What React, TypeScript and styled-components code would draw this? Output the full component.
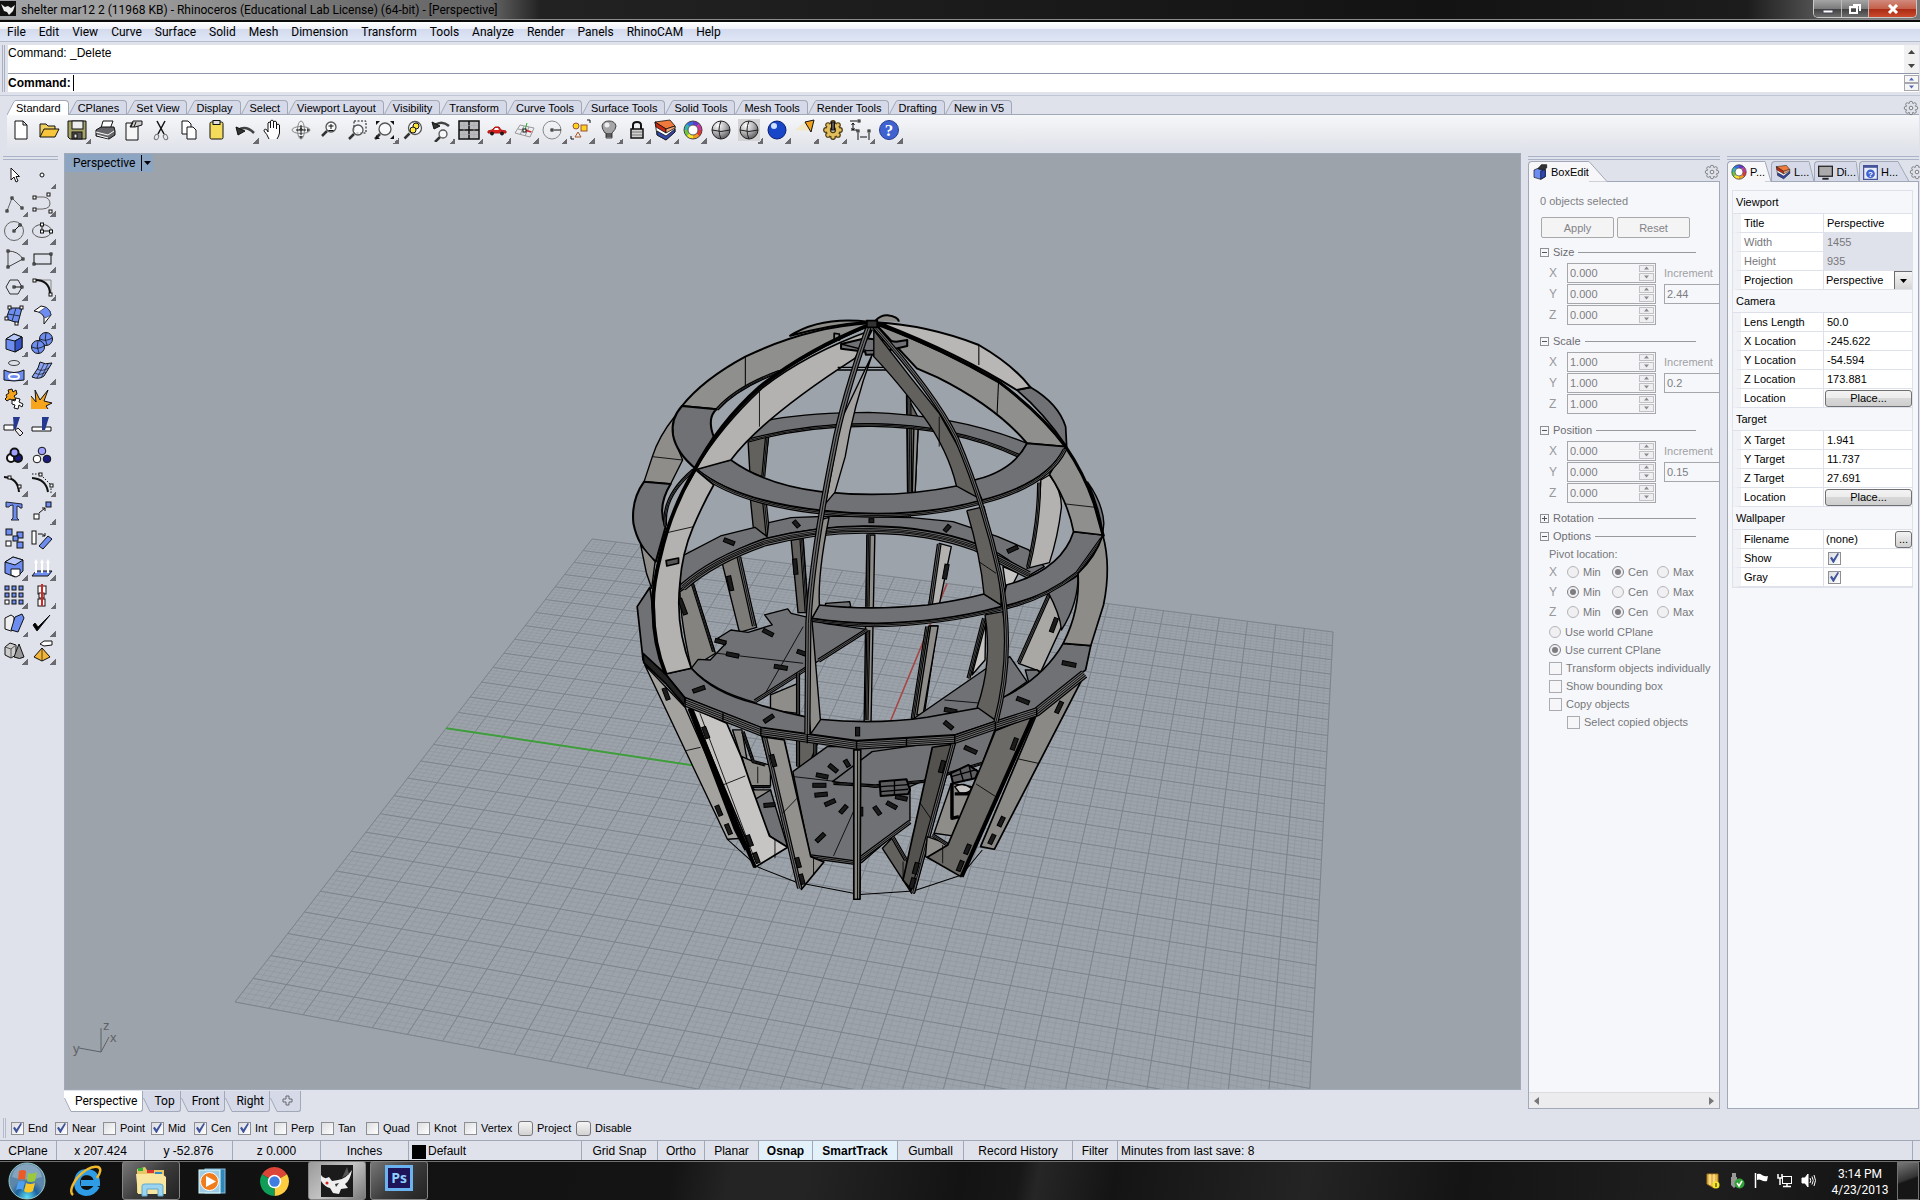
import React from 'react';
import styled, { createGlobalStyle, css } from 'styled-components';

const ui = '"Liberation Sans", Arial, sans-serif';
const segoe = 'Roboto, "Open Sans", sans-serif';
const edge = '#a1a9b9';
const chrome = '#dfe2ea';

const Global = createGlobalStyle`
  *, *::before, *::after { box-sizing: border-box; }
  html, body { margin: 0; height: 100%; }
  body { background: ${chrome}; font: 11px ${ui}; color: #000; overflow: hidden; }
  button, input, select { font: inherit; color: inherit; margin: 0; padding: 0; border: 0; background: none; border-radius: 0; }
  svg { display: block; flex: none; }
`;

const Page = styled.div`display: flex; flex-direction: column; height: 100vh;`;

/* ---------- title bar ---------- */
const TitleBar = styled.header`
  display: flex; align-items: flex-start; height: 22px; flex: none;
  background: linear-gradient(90deg, #77777799 0, #a0a0a0 130px, #6e6e6e 360px, #666 490px, #222 540px, #131313 75%, #1c1c1c 91%, #777 97%);
  border-bottom: 2px solid #0b0b0b; box-shadow: inset 0 -1px #8a8a8a;
`;
const TitleText = styled.h1`margin: 0; padding-left: 5px; font: 12px/20px ${segoe}; color: #000; flex: 1;`;
const WinButtons = styled.div`
  display: flex; height: 18px; margin-right: 3px; border: 1px solid #c9c9c9; border-top: 0; border-radius: 0 0 5px 5px; overflow: hidden;
`;
const WinButton = styled.button<{ $w: number; $red?: boolean }>`
  width: ${p => p.$w}px; display: grid; place-items: center; border-right: 1px solid #bbb;
  background: ${p => (p.$red ? 'linear-gradient(#d08a7c 0, #c5614c 50%, #a82a13 52%, #cc4a2c)' : 'linear-gradient(#a5a5a5 0, #7c7c7c 50%, #3f3f3f 52%, #6d6d6d)')};
  &:last-child { border-right: 0; }
`;

/* ---------- menu ---------- */
const MenuBar = styled.nav`
  display: flex; height: 20px; flex: none; align-items: center; padding-left: 1px;
  background: linear-gradient(#fff 0, #eef1f8 35%, #d3daed 36%, #dfe6f6 95%); border-bottom: 1px solid #b6bccc;
`;
const MenuItem = styled.button`font: 12px/18px ${segoe}; padding: 0 7px 0 6px;`;

/* ---------- command area ---------- */
const Command = styled.section`
  display: flex; flex-direction: column; height: 47px; flex: none; margin: 3px 1px 3px 2px; padding-left: 3px;
  border-left: 3px double #a9b0c4; font-size: 12px;
`;
const History = styled.div`display: flex; background: #fff; height: 29px; border-bottom: 1px solid #8f98ab;`;
const HistoryText = styled.div`flex: 1; line-height: 16px;`;
const Prompt = styled.div`display: flex; align-items: center; height: 18px; background: #fff;`;
const PromptLabel = styled.label`font-weight: bold; padding: 0 2px 0 0;`;
const PromptInput = styled.input`flex: 1; height: 16px; border-left: 1px solid #000; outline: 0;`;
const ScrollPair = styled.div`display: flex; flex-direction: column; width: 15px; background: #f1f1f1;`;
const ScrollBtn = styled.button<{ $boxed?: boolean }>`
  flex: 1; display: grid; place-items: center; ${p => p.$boxed && css`border: 1px solid #a7a7ad; background: #f6f6f6; min-height: 8px;`}
`;
const Caret = ({ up, c = '#444', w = 7 }: { up?: boolean; c?: string; w?: number }) => (
  <svg width={w} height="4" viewBox="0 0 7 4"><path d={up ? 'M0 4L3.500 0L7 4Z' : 'M0 0L3.500 4L7 0Z'} fill={c} /></svg>
);

/* ---------- toolbar tabs ---------- */
const Tools = styled.section`
  flex: none; height: 56px; border-top: 1px solid #c0c6d4; padding: 4px 1px 0 7px;
`;
const TabRow = styled.div`display: flex; height: 15px; align-items: stretch; box-shadow: inset 0 -1px ${edge};`;
const TabButton = styled.button<{ $on?: boolean }>`display: flex; color: #000; height: 15px;`;
const TabLabel = styled.span<{ $on?: boolean }>`
  border: solid ${edge}; border-width: 1px 1px 0 0; border-radius: 0 4px 0 0; padding: 0 7px 0 0; line-height: 15px; height: 15px; white-space: nowrap;
  background: ${p => (p.$on ? '#fff' : '#d5d9e8')}; ${p => !p.$on && 'box-shadow: inset 0 -1px #a1a9b9;'}
`;
const GearSlot = styled.button`margin-left: auto; align-self: center; display: grid; place-items: center; width: 16px;`;
const IconRow = styled.div`display: flex; height: 36px; padding-top: 1px; background: linear-gradient(#f6f7f9, #e8eaef 60%, ${chrome});`;
const IconButton = styled.button<{ $more?: boolean }>`
  width: 28px; height: 28px; display: grid; place-items: center; 
  ${p => p.$more && css`background: linear-gradient(135deg, transparent 50%, #6b6b6f 50%) 100% 100% / 6px 6px no-repeat;`}
`;

/* ---------- main area ---------- */
const Main = styled.main`display: flex; flex: 1; min-height: 0;`;
const LeftTools = styled.aside`width: 64px; flex: none; padding: 5px 6px 0 3px;`;
const Grip = styled.div`height: 4px; border: solid #aab2c8; border-width: 1px 0;`;
const LeftGrid = styled.div`display: grid; grid-template-columns: 28px 28px; grid-auto-rows: 28px; margin-left: -3px; padding-top: 1px;`;
const Center = styled.div`flex: 1; min-width: 0; display: flex; flex-direction: column; padding-top: 2px;`;
const Viewport = styled.section`
  flex: 1; min-height: 0; display: grid; background: #9da3aa; border: solid ${edge}; border-width: 1px 1px 1px 1px; overflow: hidden;
  & > * { grid-area: 1 / 1; }
`;
const Scene = styled.svg`width: 100%; height: 100%; min-height: 0;`;
const ViewLabel = styled.button`
  align-self: start; justify-self: start; display: flex; align-items: center; height: 18px; padding-left: 8px; gap: 6px; background: #8ba5c3; font: 12px/18px ${segoe}; z-index: 1;
`;
const LabelDrop = styled.span`display: flex; align-items: center; height: 16px; border-left: 1px solid #000; padding: 0 2px;`;
const ViewTabs = styled.div`display: flex; height: 26px; flex: none; padding-top: 1px;`;
const ViewTab = styled.button<{ $on?: boolean }>`
  display: flex; height: 21px; font: 12px/20px ${segoe};
`;
const ViewTabLabel = styled.span<{ $on?: boolean }>`
  height: 21px; padding-right: 5px; border: solid ${edge}; border-width: 0 1px 1px 0; border-radius: 0 0 3px 0; background: ${p => (p.$on ? '#fff' : '#d5d9e8')};
`;

/* ---------- docked panels ---------- */
const Docks = styled.div`display: flex; gap: 7px; flex: none; padding: 5px 1px 7px 7px;`;
const Dock = styled.section`width: 192px; display: flex; flex-direction: column;`;
const DockTabs = styled.div`display: flex; height: 21px; margin-top: 1px; box-shadow: inset 0 -1px ${edge};`;
const DockTab = styled.button`display: flex; height: 21px;`;
const DockTabLabel = styled.span<{ $on?: boolean }>`
  display: flex; align-items: center; gap: 3px; height: 21px; padding-left: 3px; border: solid ${edge}; border-width: 1px 0 0 1px; border-radius: 4px 0 0 0;
  background: ${p => (p.$on ? '#f7f7fa' : '#d5d9e8')}; ${p => !p.$on && 'box-shadow: inset 0 -1px #a1a9b9;'}
`;
const DockBody = styled.div`flex: 1; min-height: 0; display: flex; flex-direction: column; background: #f6f7fa; border: 1px solid ${edge}; border-top: 0; overflow: hidden;`;

const BoxContent = styled.div`flex: 1; padding: 12px 0 0 11px; color: #808084;`;
const Selected = styled.p`margin: 0; line-height: 14px;`;
const PairButtons = styled.div`display: flex; gap: 3px; margin: 9px 0 4px 1px;`;
const PushButton = styled.button`width: 73px; height: 21px; border: 1px solid #a9a9ac; border-radius: 2px; background: #f4f4f5; color: #838387;`;
const Section = styled.section`margin-bottom: 6px;`;
const SectionHead = styled.h2<{ $h: number }>`
  display: flex; align-items: center; gap: 4px; margin: 0 23px 0 0; height: ${p => p.$h}px; font: 11px ${ui}; color: #6d6d72;
  &::after { content: ''; flex: 1; height: 1px; background: #98999d; }
`;
const Fold = styled.button`width: 9px; height: 9px; border: 1px solid #8f8f95; display: grid; place-items: center;`;
const AxisGrid = styled.div`display: grid; grid-template-columns: 27px 89px 8px 1fr; grid-auto-rows: 21px; align-items: center;`;
const AxisName = styled.label`padding-left: 9px; font-size: 12px; color: #98999d;`;
const Spin = styled.div`display: flex; height: 20px; border: 1px solid #a6a7ab; background: #f6f6f9; padding: 1px;`;
const SpinInput = styled.input`flex: 1; min-width: 0; padding-left: 1px; color: #7c7d82;`;
const SpinArrows = styled.div`display: flex; flex-direction: column; gap: 1px; width: 15px; button { border: 1px solid #c2c2c6; background: #efeff1; }`;
const IncLabel = styled.label`grid-column: 4; color: #a0a1a5;`;
const IncInput = styled.input`grid-column: 4; height: 20px; width: 100%; border: 1px solid #a6a7ab; border-right: 0; padding-left: 2px; color: #7c7d82;`;
const Options = styled.div`padding-left: 9px; display: flex; flex-direction: column;`;
const PivotRow = styled.fieldset`border: 0; margin: 0; padding: 0; display: grid; grid-template-columns: 18px 45px 45px 1fr; align-items: center; height: 20px; color: #98999d; font-size: 12px;`;
const Choice = styled.label<{ $in?: boolean }>`
  display: flex; align-items: center; gap: 4px; height: 18px; font-size: 11px; color: #77777c; white-space: nowrap; padding-left: ${p => (p.$in ? 18 : 0)}px;
`;
const Radio = styled.input`
  appearance: none; width: 12px; height: 12px; border: 1px solid #b5b5b9; border-radius: 50%; background: #f0f0f2; display: grid; place-items: center;
  &:checked { border-color: #808084; } &:checked::before { content: ''; width: 6px; height: 6px; border-radius: 50%; background: #7d7d81; }
`;
const Check = styled.input`
  appearance: none; width: 13px; height: 13px; flex: none; border: 1px solid #8e8f93; background: linear-gradient(135deg, #dcdde0, #fff); display: grid; place-items: center;
  &:checked::before { content: ''; width: 9px; height: 10px; background: #3f549d; clip-path: polygon(0 50%, 20% 38%, 38% 62%, 84% 0, 100% 8%, 42% 100%, 34% 100%); }
  &:disabled { border-color: #acacb0; background: #f6f6f9; }
`;
const HScroll = styled.div`display: flex; justify-content: space-between; align-items: center; height: 16px; padding: 0 5px; background: #ececee; border-top: 1px solid #ddd;`;

const PropTable = styled.table`margin: 8px 6px 0 4px; border-collapse: separate; border-spacing: 0; table-layout: fixed; width: 181px; border: 1px solid #dfe1ea;`;
const HeadCell = styled.th`height: 23px; padding: 0 0 0 3px; text-align: left; font-weight: normal; border-bottom: 1px solid #dfe1ea;`;
const PropRow = styled.tr<{ $dim?: boolean }>`
  height: 19px; background: #fff; color: ${p => (p.$dim ? '#77777b' : '#000')};
  th, td { border-bottom: 1px solid #dfe1ea; padding: 0; text-align: left; font-weight: normal; height: 19px; }
  th { border-left: 8px solid #f1f2f6; padding-left: 3px; }
  td { border-left: 1px solid #dfe1ea; background: ${p => (p.$dim ? '#dfe2ea' : '#fff')}; }
`;
const ValueInput = styled.input`width: 100%; padding-left: 3px; height: 16px; display: block;`;
const ValueSelect = styled.div`display: flex; align-items: stretch; height: 18px; select { appearance: none; flex: 1; padding-left: 2px; min-width: 0; }`;
const SelectArrow = styled.span`width: 18px; display: grid; place-items: center; border: solid #6c6c70; border-width: 1px 0 0 1px; background: linear-gradient(#f4f4f4, #d5d5d5);`;
const PlaceButton = styled.button`display: block; width: 87px; height: 17px; margin-left: 1px; border: 1px solid #707074; border-radius: 3px; background: linear-gradient(#f3f3f3 0, #ececec 48%, #d8d8d8 50%, #cecece);`;
const DotsButton = styled.button`width: 17px; height: 17px; border: 1px solid #707074; border-radius: 3px; background: linear-gradient(#f3f3f3, #d0d0d0);`;
const FileCell = styled.div`display: flex; justify-content: space-between; align-items: center; padding-left: 2px;`;
const CheckCell = styled.div`padding-left: 4px;`;

/* ---------- bottom ---------- */
const OsnapBar = styled.div`display: flex; align-items: center; height: 24px; flex: none; margin-left: 3px; `;
const OsnapGrip = styled.div`width: 3px; height: 20px; border: solid #b3bacb; border-width: 0 1px; margin-right: 5px;`;
const Osnap = styled.label<{ $w: number }>`display: flex; align-items: center; gap: 4px; width: ${p => p.$w}px; white-space: nowrap;`;
const ModeButton = styled.button`width: 15px; height: 15px; border: 1px solid #77777b; border-radius: 3px; background: linear-gradient(#f5f5f5, #d2d2d2);`;
const StatusBar = styled.footer`display: flex; height: 20px; flex: none; border-top: 1px solid ${edge}; font-size: 12px; line-height: 20px;`;
const StatusCell = styled.button<{ $w: number; $on?: boolean; $left?: boolean }>`
  width: ${p => p.$w}px; border-right: 1px solid ${edge}; white-space: nowrap; display: flex; align-items: center; gap: 2px;
  justify-content: ${p => (p.$left ? 'flex-start' : 'center')}; ${p => p.$left && 'padding-left: 3px;'}
  ${p => p.$on && 'font-weight: bold; background: #e3f1fb;'}
`;
const Swatch = styled.span`width: 14px; height: 14px; background: #000; margin-top: 2px;`;
const Minutes = styled.output`flex: 1; padding-left: 3px; margin-right: 7px; border-right: 1px solid ${edge};`;

const TaskBar = styled.nav`
  display: flex; align-items: stretch; height: 40px; flex: none; padding-left: 4px; border-top: 1px solid #0b0b0b; box-shadow: inset 0 1px #707070;
  background: linear-gradient(100deg, #101010 0, #141414 35%, #242424 38%, #242424 42%, #131313 50%, #171717 53%, #262626 54%, #141414 58%, #242424 68%, #141414 76%, #1f1f1f 88%, #111);
`;
const TaskButton = styled.button<{ $w: number; $state?: 'open' | 'active' }>`
  width: ${p => p.$w}px; display: grid; place-items: center; margin: 0 4px 0 0; padding-top: 1px;
  ${p => p.$state && css`border: 1px solid #858585; border-radius: 3px; background: ${p.$state === 'active' ? 'linear-gradient(135deg, #999, #c4c4c4 50%, #777)' : 'linear-gradient(135deg, #777, #3c3c3c 50%, #222)'};`}
`;
const Tray = styled.div`display: flex; align-items: center; margin-left: auto; gap: 8px; button { display: grid; place-items: center; width: 16px; }`;
const Clock = styled.time`text-align: center; color: #fff; font: 12px/16px ${segoe}; padding: 3px 0 0; margin-left: 6px; width: 58px;`;
const ShowDesktop = styled.button`&& { width: 22px; } height: 38px; align-self: center; margin-right: 1px; border: 1px solid #737373; background: linear-gradient(160deg, #777, #333 45%, #161616 50%);`;

/* ================= icons ================= */
const K = '#111';
const B = '#6d8df0';
const sq = (x: number, y: number, s = 3, f = '#fff') => <rect key={`${x}-${y}`} x={x} y={y} width={s} height={s} fill={f} stroke={K} />;
const I = ({ children, s = 24 }: { children: React.ReactNode; s?: number }) => (
  <svg width={s} height={s} viewBox="0 0 24 24" fill="none" stroke={K} strokeWidth="1">{children}</svg>
);
const Lens = ({ x = 14, y = 9, r = 5 }) => (
  <g><path d={`M${x - r + 1} ${y + r - 1}L${x - r - 4} ${y + r + 4}`} strokeWidth="2.500" stroke="#333" /><circle cx={x} cy={y} r={r} fill="#ffffff99" stroke="#555" strokeWidth="1.300" /></g>
);
const Globe = () => (
  <g>
    <defs><radialGradient id="globe" cx=".35" cy=".25" r=".8"><stop offset="0" stopColor="#fff" /><stop offset=".5" stopColor="#b5b5b8" /><stop offset="1" stopColor="#58585c" /></radialGradient></defs>
    <circle cx="12" cy="12" r="9" fill="url(#globe)" stroke="#222" /><path d="M3 12Q12 15 21 12M12 3Q8 12 12 21" stroke="#222" />
  </g>
);
const Wheel = () => {
  const c = ['#e8362c', '#f39a1f', '#f4e52b', '#6fc53b', '#2fb7b0', '#2f6fe0', '#6a35c8', '#d0309c'];
  return (<g>{c.map((k, i) => { const a = (i * Math.PI) / 4, b = a + 0.82; return <path key={k} d={`M${12 + 7 * Math.cos(a)} ${12 + 7 * Math.sin(a)}A7 7 0 0 1 ${12 + 7 * Math.cos(b)} ${12 + 7 * Math.sin(b)}`} stroke={k} strokeWidth="4" />; })}<circle cx="12" cy="12" r="9" stroke="#444" /><circle cx="12" cy="12" r="5" stroke="#555" fill="#fff" /></g>);
};
const LayersArt = () => (
  <g strokeWidth=".8">
    <path d="M2 4L13 11L22 8V14L13 22L4 17Z" fill="#fff" />
    <path d="M4 13L13 18L22 11V14L13 22L4 17Z" fill="#3247a8" />
    <path d="M2 4L17 2L22 8L13 11Z" fill="#f07a3c" />
    <path d="M2 4L13 11V15L3 9Z" fill="#c8260e" />
    <path d="M13 11L22 8V10L13 15Z" fill="#f4a878" />
  </g>
);
const GearArt = ({ f = 'none', s = '#77787d' }) => {
  const t = Array.from({ length: 8 }, (_, i) => (i * Math.PI) / 4);
  return (<g stroke={s}>{t.map(a => <circle key={a} cx={12 + 7 * Math.cos(a)} cy={12 + 7 * Math.sin(a)} r="2.300" fill={f} strokeWidth="1.200" />)}<circle cx="12" cy="12" r="6.500" fill={f === 'none' ? chrome : f} stroke="none" /><circle cx="12" cy="12" r="2.500" fill="#eee" strokeWidth="1.300" /></g>);
};
const Gear = () => <svg width="16" height="16" viewBox="1 1 22 22" fill="none"><GearArt /></svg>;

const top: [string, boolean, React.ReactNode][] = [
  ['New', false, <path d="M6 3H14L18 7V21H6ZM14 3V7H18" fill="#fff" />],
  ['Open', false, <g><path d="M3 19V6H9L11 8H18V11" fill="#f0d060" /><path d="M3 19L7 11H22L18 19Z" fill="#f7c63c" /></g>],
  ['Save', true, <g><path d="M3 3H21V21H5L3 19Z" fill="#a7a468" /><rect x="7" y="3" width="11" height="8" fill="#eee" /><rect x="7" y="14" width="10" height="7" fill="#555" /><rect x="9" y="16" width="3" height="4" fill="#eee" /></g>],
  ['Print', false, <g><path d="M8 10L10 3H20L17 11" fill="#fff" /><path d="M3 12L8 9H21L22 13V17L16 21L3 18Z" fill="#66666a" /><path d="M3 14L15 17L21 13M4 17L15 20" stroke="#fff" /></g>],
  ['Properties', false, <g><path d="M5 5H17V22H5Z" fill="#f6f6f6" /><path d="M9 9L12 3H21V7L14 9Z" fill="#ccc" /><path d="M12 4L10 9M15 4L13 9" /></g>],
  ['Cut', false, <g><path d="M8 3L15 16M16 3L9 16" strokeWidth="1.500" /><ellipse cx="7.500" cy="19" rx="2" ry="2.800" transform="rotate(25 7.500 19)" stroke="#777" /><ellipse cx="16.500" cy="19" rx="2" ry="2.800" transform="rotate(-25 16.500 19)" stroke="#777" /></g>],
  ['Copy', false, <g fill="#fff"><path d="M5 3H11L14 6V16H5Z" /><path d="M10 9H16L19 12V21H10Z" /></g>],
  ['Paste', false, <g><rect x="5" y="4" width="13" height="17" rx="1.500" fill="#f3dc5c" /><rect x="8" y="2.500" width="7" height="4" fill="#ddd" /></g>],
  ['Undo', true, <g><path d="M5 12Q13 7 21 15" strokeWidth="2.500" stroke="#444" /><path d="M3 9L5 17L12 13Z" fill="#333" /></g>],
  ['Pan', false, <path d="M8 21Q6 16 3 13Q3 10 6 12L7 14V5Q8 3 9.500 5V10V3Q11 1 12.500 3V10V4Q14 2 15.500 4V11V7Q17 5 18.500 7V15Q18 18 16 21" fill="#fff" />],
  ['Rotate View', false, <g stroke="#888"><ellipse cx="12" cy="12" rx="9" ry="3.500" /><ellipse cx="12" cy="12" rx="3.500" ry="9" /><path d="M12 7V17M7 12H17" stroke={K} /><path d="M12 9L14 12H10Z" fill="#333" stroke="none" /><path d="M12 21L14 18H10ZM21 12L18 14V10Z" fill="#444" stroke="none" /></g>],
  ['Zoom', false, <g><Lens /><path d="M11.500 8H16.500M14 6V11M11.500 12.500H16.500" /></g>],
  ['Zoom Window', false, <g><rect x="9" y="3" width="12" height="12" strokeDasharray="2 1.500" /><Lens x={13} y={12} /></g>],
  ['Zoom Extents', true, <g><Lens x={12} y={11} r={6} /><path d="M3 3H7L3 7ZM21 3H17L21 7ZM21 21H17L21 17ZM3 21V17L7 21Z" fill={K} stroke="none" /></g>],
  ['Zoom Selected', false, <g><Lens r={6.5} y={10} /><circle cx="15" cy="8" r="3" fill="#ffe83a" /><circle cx="12" cy="12" r="3" fill="#ffe83a" /></g>],
  ['Undo View', true, <g><Lens x={14} y={16} r={4} /><path d="M6 7Q13 2 20 8" strokeWidth="2.500" stroke="#444" /><path d="M3 4L5 11L11 8Z" fill="#333" /></g>],
  ['4 Viewports', true, <g strokeWidth="1.500"><rect x="2" y="3" width="20" height="18" fill="#b9bbbf" /><path d="M12 3V21M2 12H22" /><path d="M7 4V20M17 4V20M3 7.500H21M3 16.500H21" stroke="#aaa" strokeWidth=".6" /></g>],
  ['Right View', true, <g><path d="M3 13L7 12L10 9H14L16 12L21 13V15H3Z" fill="#d8201c" stroke="#b01818" /><path d="M10 10H13L14 12H9Z" fill="#fff" stroke="none" /><circle cx="7" cy="15.500" r="1.500" fill="#222" /><circle cx="17" cy="15.500" r="1.500" fill="#222" /></g>],
  ['Set CPlane', true, <g stroke="#999"><path d="M7 7L21 10L17 19L2 15ZM5 11L20 14M11 8L7 17M16 9L12 18" /><path d="M12 12L14 5" stroke="#2a2" /><path d="M12 12L18 14" stroke="#d22" strokeWidth="1.500" />{sq(10, 11)}</g>],
  ['Circle Center', true, <g><circle cx="11" cy="12" r="9" stroke="#888" />{sq(10, 11, 2)}<path d="M13 12H20" /></g>],
  ['Select', true, <g><circle cx="7" cy="8" r="3" fill="#ffd21e" stroke="#953" /><rect x="12" y="7" width="6" height="6" fill="#ffd21e" stroke="#953" /><path d="M9 14L12 19H6Z" stroke="#a52" /><path d="M18 2H21V5M2 18V21H5" /></g>],
  ['Lights', true, <g><path d="M8 15Q5 11 5 8Q6 3 12 3Q18 3 19 8Q19 11 15 15V20H9V15Z" fill="#a5a5a8" stroke="#444" /><circle cx="10" cy="7" r="2.500" fill="#eee" stroke="none" /><path d="M9 16H15M9 18H15" /></g>],
  ['Lock', true, <g><path d="M8 11V7Q8 4 12 4Q16 4 16 7V11" strokeWidth="2" /><rect x="6" y="11" width="12" height="9" fill="#d0d0d0" strokeWidth="1.500" /><path d="M7 14H17M7 17H17" stroke="#777" /></g>],
  ['Layers', true, <LayersArt />],
  ['Properties Wheel', true, <Wheel />],
  ['Shade', false, <Globe />],
  ['Ghosted', true, <g><rect x="1" y="1" width="22" height="22" fill="#d3d3d6" stroke="none" /><Globe /></g>],
  ['Render', true, <g><circle cx="12" cy="12" r="9" fill="#1747c8" stroke="#0a1c70" /><circle cx="9" cy="8" r="3" fill="#cfe0ff" stroke="none" /></g>],
  ['Spotlight', true, <g><path d="M2 12L13 3L17 13Z" fill="#f2e8c8" stroke="none" /><path d="M12 4L21 2L18 14Z" fill="#f2a21c" /></g>],
  ['Options', true, <g><GearArt f="#e3be5c" s="#4a3a10" /><rect x="10.500" y="4" width="3" height="8" fill="#555" /></g>],
  ['Dimensions', true, <g>{sq(9, 2, 2)}{sq(8, 12, 2)}{sq(19, 12, 2)}<path d="M1 3H8M4 5V12M2 12H8M9 15V22M20 15V22M11 19H18M2.500 7L4 5L5.500 7M2.500 10L4 12L5.500 10" /></g>],
  ['Help', true, <g><circle cx="12" cy="12" r="9.500" fill="#3f62d0" stroke="#27408f" /><text x="12" y="18" textAnchor="middle" fill="#fff" stroke="none" fontSize="17" fontWeight="bold" fontFamily="Liberation Serif, serif">?</text></g>],
];

const left: [string, boolean, React.ReactNode][] = [
  ['Cancel', false, <path d="M9 5V17L12 14L14 19L16 18L14 13.500H17.500Z" fill="#fff" />],
  ['Point', true, <circle cx="12" cy="12" r="2" fill="#fff" />],
  ['Polyline', true, <g><path d="M5 20L10 7L20 17" stroke="#666" />{sq(4, 19, 2)}{sq(9, 6, 2)}{sq(19, 16, 2)}</g>],
  ['Curve', true, <g><path d="M6 6H14Q20 7 20 13Q20 19 6 18" stroke="#666" />{sq(3, 5)}{sq(17, 2)}{sq(3, 17)}{sq(19, 19)}</g>],
  ['Circle', true, <g><circle cx="12" cy="12" r="9.500" stroke="#666" /><path d="M12 12L18 6" />{sq(11, 11, 2)}{sq(17, 5, 2)}</g>],
  ['Ellipse', true, <g><ellipse cx="12" cy="12" rx="9.500" ry="6.500" stroke="#555" /><path d="M12 5V12H20" />{sq(10.5, 4)}{sq(10.5, 11)}{sq(19.5, 11)}</g>],
  ['Arc', true, <g><path d="M6 4V20L21 12Q16 4 6 4" stroke="#444" />{sq(5, 3, 2)}{sq(5, 19, 2)}{sq(20, 11, 2)}</g>],
  ['Rectangle', true, <g><rect x="4" y="7" width="17" height="10" />{sq(3, 16, 2)}{sq(20, 6, 2)}</g>],
  ['Polygon', true, <g><path d="M4 12L8 5H16L20 12L16 19H8Z" stroke="#333" /><path d="M12 12H20" />{sq(11, 11, 2)}{sq(19, 11, 2)}</g>],
  ['Fillet', true, <g><path d="M6 5H21V19" stroke="#888" /><path d="M5 5Q19 5 20 18" strokeWidth="2" />{sq(3, 4)}{sq(19, 18)}</g>],
  ['Surface', true, <g><path d="M8 5H20L16 20L4 16Z" fill={B} /><path d="M14 5L10 18M6 11L18 13" stroke="#234" />{sq(6, 3)}{sq(18, 3)}{sq(3, 14)}{sq(13, 19)}</g>],
  ['Sweep', true, <g><path d="M4 8L11 3Q20 4 21 12L14 21V14Q12 9 4 8Z" fill="#fff" /><path d="M9 9L16 4Q21 8 21 12L15 15Q13 11 9 9" fill={B} stroke="#223" strokeWidth=".6" /></g>],
  ['Box', true, <g><path d="M4 8L12 3L20 6V17L13 21L4 18Z" fill={B} /><path d="M4 8L13 10L20 6L12 3Z" fill="#b9c8fa" /><path d="M13 10V21L20 17V6Z" fill="#3554c6" /></g>],
  ['Boolean Union', true, <g><circle cx="16" cy="8" r="6.500" fill={B} /><circle cx="8" cy="16" r="6.500" fill={B} /><path d="M2 16Q8 19 14 15M8 10Q6 16 9 22M10 8Q16 11 22 7M16 2Q14 8 17 14" strokeWidth=".8" /></g>],
  ['Project', true, <g><ellipse cx="12" cy="4" rx="5.500" ry="2.500" stroke="#444" /><path d="M2 11Q12 16 22 11V21Q12 23 2 21Z" fill={B} /><ellipse cx="12" cy="17.500" rx="5" ry="2.500" fill={B} stroke="#fff" strokeWidth="2" /></g>],
  ['Mesh', true, <g><path d="M10 3Q15 6 22 4L14 17Q9 21 2 18L8 9Z" fill="#8aa4f4" /><path d="M14 5L7 19M18 5L11 19M7 10Q12 13 19 9M5 14Q10 17 16 13" strokeWidth=".7" /></g>],
  ['Join', false, <g><path d="M4 8L7 6L6 3L10 2L11 5L14 3L15 7L12 9L14 12L10 13L8 12L5 14L3 12L5 10Z" fill="#f5a21d" /><path d="M10 13L13 14L14 11L18 12L17 15L21 17L20 20L17 18L16 22L12 21L13 18L10 17Z" fill="#fff" /></g>],
  ['Explode', false, <g><path d="M1 9L6 15L5 3L10 13L18 3L14 14L22 16L16 19L18 22H1Z" fill="#f7a51c" stroke="none" /><path d="M1 9L6 15L5 3L10 13L18 3L14 14L22 16L16 19L18 22" /></g>],
  ['Trim', false, <g><path d="M2 10H12V15H2Z" fill="#fff" /><path d="M11 2H18L14 14H12Z" fill="#24398f" stroke="none" /><path d="M13 15L16 13L21 18L18 21Z" fill="#eee" /></g>],
  ['Split', false, <g><path d="M2 12H21V16H2Z" fill="#fff" /><path d="M12 2H19L15 15H12Z" fill="#24398f" stroke="none" /></g>],
  ['Group', true, <g strokeWidth="2"><circle cx="9" cy="15" r="4" fill="#fff" /><circle cx="16" cy="15" r="4" fill="#1a1a80" /><circle cx="12.500" cy="9.500" r="4" fill="#9fa0ff" /></g>],
  ['Ungroup', false, <g><circle cx="12" cy="8" r="3.800" fill="#9fa0ff" /><circle cx="7" cy="16" r="3.800" fill="#fff" /><circle cx="17" cy="16" r="3.800" fill="#1a1a80" /></g>],
  ['Edit Points', true, <g><path d="M2 6Q16 7 17 21" strokeWidth="2" />{sq(6, 5)}{sq(16, 14)}</g>],
  ['Control Points', true, <g><path d="M2 7Q16 8 18 21" strokeWidth="2" /><path d="M2 3H10L21 14V22" strokeDasharray="1.500 1.500" />{sq(9, 2)}{sq(20, 13)}</g>],
  ['Text', false, <path d="M4 3L20 5V9H18Q18 7 15 7V19L17 21H9L11 19V6Q7 6 7 8H4Z" fill={B} stroke="#223" />],
  ['Move', true, <g>{sq(4, 15, 5)}{sq(16, 3, 5, B)}<path d="M9 14L15 9M12 9H15V12" /></g>],
  ['Copy Object', false, <g>{sq(4, 2, 6, B)}{sq(15, 5, 6, B)}{sq(11, 9, 5, B)}{sq(4, 14, 5)}{sq(15, 15, 6, B)}</g>],
  ['Rotate', false, <g><rect x="2" y="4" width="4" height="13" fill="#fff" /><path d="M9 19L18 9L22 12L13 22Z" fill={B} /><path d="M8 7Q13 6 15 9M15 6V9H12" /></g>],
  ['Solid Tools', true, <g><path d="M3 7L11 2L21 5V16L17 20H13V22L3 18Z" fill={B} /><path d="M3 7L13 10L21 5L11 2Z" fill="#b9c8fa" /><path d="M9 14H18V20L14 22L9 20Z" fill="#fff" /></g>],
  ['Extrude', true, <g><path d="M2 21L6 16H22L18 21Z" fill={B} /><path d="M6 18V7M12 18V7M18 18V7" stroke="#fff" strokeWidth="2" /><path d="M6 4L8 8H4ZM12 4L14 8H10ZM18 4L20 8H16Z" fill="#fff" stroke="none" /></g>],
  ['Array', true, <g>{[3, 10, 17].map(y => [3, 10, 17].map(x => sq(x, y, 4, x === 3 && y === 17 ? '#fff' : B)))}</g>],
  ['Align', true, <g>{sq(8, 3, 8)}{sq(9, 10, 5)}{sq(8, 16, 7)}<path d="M12 1V23" stroke="#d22" strokeWidth="2" /></g>],
  ['Unroll', true, <g><path d="M3 7L9 4L12 6V19L9 20L3 18Z" fill="#eee" /><path d="M13 6L20 3L22 7L16 21L9 19Z" fill={B} /></g>],
  ['Check', true, <path d="M3 14L7 20L20 4L8 16L5 12Z" fill="#000" />],
  ['Solids', true, <g><path d="M3 8L8 4L14 6V16L9 19L3 16Z" fill="#ccc" /><path d="M3 8L9 10L14 6M9 10V19" stroke="#555" /><path d="M17 5L22 18Q18 21 12 18Z" fill="#999" /></g>],
  ['Gumball', true, <g><path d="M12 9L20 18L12 22L4 18Z" fill="#f3b43a" /><path d="M12 9V22" strokeWidth=".7" /><path d="M10 5L14 2H22V6L14 7Z" fill="#fff" /></g>],
];

/* ================= 3D scene ================= */
type Pt = [number, number];
/* perspective mapping of the unit square to the ground plane */
const corners: Pt[] = [[592, 539], [1333, 632], [1304, 1203], [235, 1002]];
const project = (() => {
  const [[x0, y0], [x1, y1], [x2, y2], [x3, y3]] = corners;
  const dx1 = x1 - x2, dx2 = x3 - x2, sx = x0 - x1 + x2 - x3;
  const dy1 = y1 - y2, dy2 = y3 - y2, sy = y0 - y1 + y2 - y3;
  const den = dx1 * dy2 - dx2 * dy1;
  const g = (sx * dy2 - dx2 * sy) / den, h = (dx1 * sy - sx * dy1) / den;
  return (u: number, v: number): Pt => {
    const w = g * u + h * v + 1;
    return [((x1 - x0 + g * x1) * u + (x3 - x0 + h * x3) * v + x0) / w, ((y1 - y0 + g * y1) * u + (y3 - y0 + h * y3) * v + y0) / w];
  };
})();
const seg = (u0: number, v0: number, u1: number, v1: number) => {
  const a = project(u0, v0), b = project(u1, v1);
  return `M${a[0].toFixed(1)} ${a[1].toFixed(1)}L${b[0].toFixed(1)} ${b[1].toFixed(1)}`;
};
const MAJORS = 28;
const gridPath = (n: number) => Array.from({ length: n + 1 }, (_, i) => seg(i / n, 0, i / n, 1) + seg(0, i / n, 1, i / n)).join('');

const RING = '#707175', LITE = '#b3b2b0', MID = '#8e8d8a', DARK = '#63615e', PALE = '#c6c5c3';
const P = ({ d, f = 'none', w = 4 }: { d: string; f?: string; w?: number }) => <path d={d} fill={f} stroke="#000" strokeWidth={w} strokeLinejoin="round" />;
/* a laminated plywood edge: dark outline with ply lines */
const Ply = ({ d, w = 14 }: { d: string; w?: number }) => (
  <g fill="none" strokeLinejoin="round"><path d={d} stroke="#000" strokeWidth={w} /><path d={d} stroke="#6c6c6e" strokeWidth={w - 7} /><path d={d} stroke="#000" strokeWidth={w > 20 ? w - 13 : 2.5} />{w > 20 && <><path d={d} stroke="#6c6c6e" strokeWidth={w - 18} /><path d={d} stroke="#000" strokeWidth="2.500" /></>}</g>
);
const slots = (list: number[][]) => list.map(([x, y, r, l = 32]) => <rect key={`${x}/${y}`} x={-l / 2} y="-6" width={l} height="12" transform={`translate(${x} ${y}) rotate(${r})`} fill="#1c1c1c" stroke="#000" strokeWidth="3" />);

const Model = () => (
  <g transform="translate(600 290) scale(.3444 .3333)">
    <P w={3} d="M370 1648L460 1732L570 1777L755 1814L910 1803L1050 1755L1110 1680" />
    {/* far crown */}
    <P f={MID} d="M550 138Q640 78 780 95Q660 105 550 138" w={6} />
    <P f={MID} d="M800 92Q815 75 835 76Q865 80 868 95" w={6} />
    {/* far verticals */}
    <P f={DARK} d="M430 455L475 415L497 380L475 562L435 545Z" />
    <Ply d="M490 385L474 560" w={12} />
    <P f={DARK} d="M890 315L925 385L915 607L893 607Z" />
    <Ply d="M897 320L900 606" w={14} />
    <P f={MID} d="M912 385L925 385L915 607L907 607Z" />
    <P f={DARK} d="M437 630L445 712L488 742L475 640Z" />
    <Ply d="M478 640L488 740" w={14} />
    <Ply d="M897 640L893 712" w={16} />
    {/* upper ring, back */}
    <P f={RING} d="M430 455Q460 395 500 388Q620 367 780 367Q1040 375 1240 460L1215 500Q1030 405 790 402Q600 400 430 455" />
    <Ply d="M430 452Q600 403 790 405Q1030 408 1215 497" w={12} />
    {/* middle ring, back */}
    <P f={RING} d="M232 900L235 800L350 738L450 712L485 740L490 698L555 683L680 678L905 683L1025 695L1155 740L1245 780L1290 830L1240 860Q1180 790 1090 760Q960 710 790 708Q640 705 480 745Q330 800 232 900" />
    {/* posts below the middle ring */}
    <P f="#7d7b78" d="M355 820L400 797L455 1012L405 1027Z" />
    <Ply d="M403 800L448 1008" />
    <P f={DARK} d="M555 750L590 746L605 968L575 968Z" />
    <Ply d="M585 750L600 965" w={12} />
    <P f={LITE} d="M985 760L1020 770L985 945L955 945Z" />
    <Ply d="M985 762L960 942" />
    <P f="#84837f" d="M232 905L270 880L335 1090L265 1135Q235 1000 232 905" />
    <Ply d="M268 880L330 1085" w={10} />
    <P f="#83817e" d="M955 1008L980 1008L940 1285L905 1285Z" />
    <P f={MID} d="M960 1008L982 1008L938 1275L920 1275Z" />
    <Ply d="M950 1010L908 1285" w={12} />
    <P f={MID} d="M775 735H798L787 1295H767Z" />
    <Ply d="M780 735L777 950M779 1020L774 1290" w={12} />
    <P f={PALE} d="M1170 830L1215 850L1200 880L1178 890Z" />
    <P f={PALE} d="M1120 1000L1118 1110L1080 1155Z" />
    <Ply d="M1115 985L1070 1165" w={12} />
    <P f="#a9a8a5" d="M1310 900L1345 990L1340 1010L1280 1145L1215 1120Z" />
    <Ply d="M1310 900L1216 1118" w={12} />
    <P f={RING} d="M1300 905L1388 850Q1390 940 1340 1020Q1335 970 1300 905" />
    <Ply d="M240 892Q330 810 480 757Q640 716 790 720Q960 722 1090 772L1245 855" w={24} />
    <P f={LITE} d="M1280 570L1305 555Q1340 600 1340 650Q1330 740 1305 818L1240 835Q1275 700 1280 570" />
    <Ply d="M1275 578Q1275 700 1243 832" w={12} />
    {slots([[375, 755, 22], [570, 702, 50, 22], [788, 692, 0, 14], [1008, 715, -50, 22], [1198, 778, -25], [567, 830, 85, 46], [378, 880, 78, 44], [1004, 845, -80, 44], [240, 950, 70, 50], [1318, 1005, -70, 44]])}
    {/* stair floors inside */}
    <P f={RING} d="M775 1018L650 1000L655 940L725 935L728 950L635 990L555 970L545 957L478 975L500 1005L430 1027L380 1020L342 1045L366 1060L320 1110L285 1108L265 1135Q330 1205 450 1237Z" />
    <Ply d="M450 1234L600 1135M635 1112L775 1020" w={13} />
    <P w={2.500} d="M340 1090L590 1120M590 1010L480 1210" />
    {slots([[385, 1095, 12, 36], [488, 1028, 28], [525, 1132, 10, 38], [585, 1088, 20, 26], [350, 1055, 15]])}
    <P f={RING} d="M905 1290L1115 1140L1190 1100L1240 1175L1170 1225L1095 1265Z" />
    <P w={2.500} d="M1000 1230L1110 1240" />
    <P f={RING} d="M1235 1140L1270 1140L1290 1165L1245 1178Z" />
    {slots([[1018, 1262, 12, 36]])}
    {/* pieces visible under the floor ring */}
    <P f={MID} d="M495 1215L575 1180V1270L495 1260Z" />
    <P f={MID} d="M385 1320L412 1320L440 1490L490 1545L470 1600Z" />
    <P f={MID} d="M412 1400L445 1415L495 1425V1490H436Z" />
    <P f={MID} d="M438 1500H495L500 1540L445 1530Z" />
    <P w={2.500} d="M458 1430V1480" />
    <Ply d="M415 1325L445 1415L480 1425M440 1490H495" w={10} />
    <P f={DARK} d="M575 1340H640L600 1440L575 1430Z" />
    <Ply d="M575 1150V1430M625 1350V1400" w={12} />
    <P f={RING} d="M440 1535L495 1500L545 1672L495 1640Z" />
    <P f={RING} d="M560 1445L660 1370L960 1370L945 1470L900 1490V1592L760 1718L610 1698Z" />
    <P f={RING} d="M675 1475L790 1385L1030 1350L1150 1310L1110 1420L1020 1450L940 1475L800 1492Z" />
    <Ply d="M678 1480L800 1488L940 1474L1110 1420" w={10} />
    <P w={2.500} d="M562 1460L680 1474M738 1560L678 1698" />
    <Ply d="M612 1700L740 1718L900 1596" w={14} />
    <P f="#5d5d60" d="M812 1475L890 1468L900 1500L895 1512L815 1518Z" w={6} />
    <P d="M815 1490L895 1484M815 1505L895 1498M855 1470V1515" />
    <P f={MID} d="M1020 1480L1080 1490L1040 1640L970 1630Z" />
    <P f={PALE} d="M1030 1490Q1055 1475 1078 1495Q1075 1510 1045 1510Z" />
    <P w={10} d="M1022 1480V1585L1042 1580M1030 1512H1078" />
    <P f="#5d5d60" d="M1018 1450L1070 1425L1098 1445L1090 1465L1025 1480Z" w={6} />
    <P d="M1020 1460L1095 1438M1045 1438L1055 1472M1072 1428L1080 1468" />
    {slots([[717, 1420, 60, 22], [677, 1435, 40, 30], [645, 1458, 12, 34], [637, 1486, 0, 38], [642, 1514, -5, 36], [668, 1538, -25], [707, 1558, -50, 28], [757, 1565, 90, 26], [805, 1562, 55, 28], [847, 1546, 30], [875, 1524, 12, 34], [640, 1643, -45, 32], [492, 1545, -5], [1076, 1380, 25, 38]])}
    {/* lower legs */}
    <P f="#a3a29f" d="M130 1125L247 1252L415 1645L370 1648Z" />
    <P w={12} d="M260 1255L395 1620L425 1680" />
    <P f={PALE} d="M262 1250L368 1300L410 1400L440 1490L492 1638L545 1672L450 1732L425 1650Z" w={5} />
    <P w={11} d="M264 1252L400 1610L450 1732" />
    <P w={2.500} d="M290 1270L450 1710M357 1485L422 1458M508 1650V1705M250 1382L292 1372" />
    <P f="#93918d" d="M470 1340L535 1350L612 1700L650 1716L585 1798Z" w={5} />
    <Ply d="M478 1345L580 1795" w={16} />
    <P w={2.500} d="M530 1570L572 1525M620 1705V1755" />
    <P f={DARK} d="M820 1675L852 1640L890 1712L905 1810Z" />
    <P f="#54524f" d="M965 1372L1030 1362L912 1810L880 1770Z" w={5} />
    <Ply d="M1026 1360L908 1808" w={15} />
    <P w={2.500} d="M930 1540L962 1588M880 1715V1770" />
    <P f={MID} d="M950 1640L1010 1662L1050 1750L945 1700Z" />
    <Ply d="M965 1635L1010 1665M850 1642L888 1710" w={12} />
    <P f="#6c6a67" d="M1148 1322L1262 1275L1060 1740L1048 1760L950 1702L1010 1665L1110 1420Z" w={5} />
    <P w={12} d="M1258 1278L1050 1760" />
    <P w={2.500} d="M1092 1482L1152 1522M995 1665V1720" />
    <P f="#8a8985" d="M1268 1273L1405 1158L1145 1678L1105 1670Z" w={5} />
    <P w={2.500} d="M1215 1407L1272 1420" />
    <P f="#888683" d="M737 1380H757L755 1828H737Z" w={5} />
    <P d="M748 1380V1828" w={3} />
    {slots([[192, 1212, 70, 36], [345, 1562, 68, 32], [373, 1618, 68, 32], [307, 1328, 70, 36], [434, 1652, 70, 34], [454, 1704, 70, 32], [503, 1412, 75, 36], [575, 1718, 75, 30], [586, 1768, 75, 30], [993, 1430, -75, 36], [917, 1735, -75, 34], [907, 1780, -75, 32], [1203, 1362, -70, 36], [1067, 1678, -68, 30], [1046, 1728, -68, 32], [1333, 1252, -65, 36], [1165, 1595, -65, 30], [1138, 1648, -65, 30]])}
    {/* left shell */}
    <P f={RING} d="M145 892L108 950L125 1110L190 1155Q155 1040 150 930Z" w={5} />
    <P f={MID} d="M218 378Q170 440 152 500L128 575L205 582L240 510Q215 460 218 378" />
    <P w={2.500} d="M152 500L238 510" />
    <P f={RING} d="M128 575Q90 630 97 700Q110 770 162 815L190 712Q165 650 205 582Z" w={6} />
    <P f={MID} d="M118 765L135 850L150 895L160 815Z" />
    <Ply d="M190 708Q180 620 272 540" w={11} />
    <P f="#8f8f8d" d="M780 100Q600 112 422 200Q300 268 238 348L340 358Q400 292 530 240Q650 165 775 110Z" w={6} />
    <P w={3} d="M422 200V290" />
    <Ply d="M340 358Q400 290 520 245" w={10} />
    <P f={RING} d="M238 348Q205 385 212 435Q222 490 280 538L330 440Q310 385 338 358Z" w={6} />
    {/* right shell */}
    <P f={RING} d="M1210 300L1250 292Q1330 340 1352 410L1355 470Q1290 370 1210 300" w={5} />
    <P f="#b8b7b5" d="M800 97Q950 105 1100 165Q1200 225 1250 292L1210 300Q1040 190 820 102Z" w={6} />
    <P w={3} d="M1100 165V225" />
    <P f="#8f8f8d" d="M800 102Q1000 180 1157 275Q1280 370 1352 470L1240 460Q1150 350 980 262L920 235Z" w={6} />
    <P w={9} d="M805 100Q1000 180 1157 275Q1280 370 1352 470" />
    <P w={3} d="M1157 278L1153 372" />
    {/* big floor ring, front */}
    <P f={RING} d="M190 1152L265 1135Q330 1210 450 1240Q520 1265 595 1280L635 1288Q800 1305 950 1282L1095 1255L1175 1220Q1290 1160 1345 1060L1425 1067L1410 1140L1268 1255L1148 1295L1030 1335L745 1352L465 1312L245 1222Z" w={5} />
    <P f="#222" w={5} d="M125 1090L188 1150L247 1224V1248L190 1180L127 1118Z" />
    <Ply d="M247 1236L467 1325L745 1366L1030 1348L1148 1306L1268 1266L1406 1152" w={27} />
    <P w={4} d="M467 1312V1340M745 1352V1380M1030 1335V1362M1148 1292V1320M1268 1255V1280M247 1222V1248M357 1270V1292M602 1335V1360M890 1345V1370" />
    {slots([[287, 1198, -20, 36], [490, 1286, -35, 32], [748, 1325, 90, 26], [1012, 1306, 40, 30], [1228, 1232, 22, 38], [1362, 1122, 12, 40]])}
    {/* lower spiral band */}
    <P f={RING} d="M1375 725L1460 735Q1445 830 1350 880Q1270 925 1165 950Q990 998 800 1000Q700 998 615 985L637 945Q780 962 950 945Q1050 930 1115 912L1165 945L1180 885Q1340 840 1375 725" w={5} />
    <Ply d="M615 990Q700 1003 800 1006Q990 1002 1165 956Q1290 928 1385 850L1458 745" w={12} />
    <P f="#8d8c89" d="M1460 735Q1485 830 1462 945L1425 1067L1345 1060Q1395 960 1388 850Q1440 800 1460 735" w={5} />
    <P f="#8f8f8d" d="M1352 470Q1410 560 1438 650L1460 735L1375 725Q1360 640 1305 553Z" w={5} />
    <P w={9} d="M1352 470Q1405 550 1435 640L1462 740" />
    <P w={2.500} d="M1352 642L1438 652" />
    <P f={RING} d="M1415 575Q1460 640 1463 700L1460 730Q1450 650 1415 575" />
    {/* upper ring, front */}
    <P f={RING} d="M280 538L330 522L380 510Q480 585 640 605Q850 628 1035 588L1095 568Q1200 540 1240 460L1352 470Q1300 580 1110 630Q900 690 650 662Q400 635 280 538" w={5} />
    <Ply d="M280 542Q400 642 650 668Q900 696 1110 636Q1300 586 1350 478" w={13} />
    {/* main left rib */}
    <P f={LITE} d="M790 120Q600 190 470 295Q350 410 275 540L380 510Q470 385 740 205L775 150Z" w={5} />
    <P f={LITE} d="M278 540L330 585Q300 640 270 712Q238 790 232 880Q218 1010 265 1135L190 1152Q155 1060 155 960Q150 900 172 800Q205 660 278 540" w={5} />
    <P w={11} d="M780 105Q600 180 465 290Q345 400 272 545Q205 660 175 800Q150 900 155 960Q155 1060 190 1150" />
    <P w={2.500} d="M463 305V410M195 728L272 710" />
    <P f="#555" w={5} d="M192 812L228 804V820L194 828Z" />
    {/* hub */}
    <P f={RING} d="M700 162L770 145L860 155L892 150V168L842 180V192L772 194L770 185L700 176Z" w={6} />
    <P d="M700 162L775 182L842 180M690 232H850M690 240H850" w={4} />
    <P w={5} d="M680 130L695 132V150H680Z" />
    {/* centre left rib */}
    <P f="#a3a2a0" d="M790 195Q735 350 712 500L682 607L655 640L700 390Z" />
    <P f="#8f8d8a" d="M665 682Q632 850 637 945L615 985L640 1290L612 1332L600 1200L610 950L640 690Z" />
    <Ply d="M782 105Q705 330 678 480Q615 800 605 1000L602 1332" w={18} />
    {/* centre right rib */}
    <P f={DARK} d="M795 120L900 260L985 370L1040 470L1110 630L1070 608L1035 588Q1010 480 940 380Q860 270 795 200Z" />
    <P f={DARK} d="M1065 662L1115 650L1160 850L1165 945L1115 912Q1105 800 1065 662" />
    <P f={DARK} d="M1118 975L1170 965Q1190 1100 1150 1292L1095 1252Q1140 1120 1118 975" />
    <Ply d="M795 108Q970 310 1035 445Q1115 640 1160 850Q1205 1080 1150 1295" w={15} />
    <P w={2.500} d="M985 380V470M1100 815L1150 850" />
    <path d="M775 92H805V112H775Z" fill="#333" stroke="#000" strokeWidth="5" />
  </g>
);

/* ================= data ================= */
const menus = ['File', 'Edit', 'View', 'Curve', 'Surface', 'Solid', 'Mesh', 'Dimension', 'Transform', 'Tools', 'Analyze', 'Render', 'Panels', 'RhinoCAM', 'Help'];
const tabs = ['Standard', 'CPlanes', 'Set View', 'Display', 'Select', 'Viewport Layout', 'Visibility', 'Transform', 'Curve Tools', 'Surface Tools', 'Solid Tools', 'Mesh Tools', 'Render Tools', 'Drafting', 'New in V5'];
const osnaps: [string, boolean, number][] = [['End', true, 44], ['Near', true, 48], ['Point', false, 48], ['Mid', true, 43], ['Cen', true, 44], ['Int', true, 36], ['Perp', false, 47], ['Tan', false, 45], ['Quad', false, 51], ['Knot', false, 47], ['Vertex', false, 54]];
const boxes = [['Size', '0.000', '2.44'], ['Scale', '1.000', '0.2'], ['Position', '0.000', '0.15']];

const Slant = ({ on }: { on?: boolean }) => (
  <svg width="9" height="15" viewBox="0 0 9 15"><path d="M0 15L7 1.500Q8 .5 9 .5V15Z" fill={on ? '#fff' : '#d5d9e8'} /><path d={`M0 15L7 1.500Q8 .5 9 .5${on ? '' : 'M0 14.500H9'}`} fill="none" stroke={edge} /></svg>
);
const ViewSlant = ({ on }: { on?: boolean }) => (
  <svg width="11" height="21" viewBox="0 0 11 21"><path d="M0 0V7L7 20.500H11V0Z" fill={on ? '#fff' : '#d5d9e8'} /><path d="M.5 7L7 20.500H11" fill="none" stroke={edge} /></svg>
);
const DockSlant = ({ on, w = 12 }: { on?: boolean; w?: number }) => (
  <svg width={w} height="21" viewBox={`0 0 ${w} 21`} preserveAspectRatio="none"><path d={`M0 .5L${w} 20.500H0Z`} fill={on ? '#f7f7fa' : '#d5d9e8'} /><path d={`M0 .5L${w} 20.500${on ? '' : 'H0'}`} fill="none" stroke={edge} /></svg>
);

const SpinField = ({ id, value }: { id: string; value: string }) => (
  <Spin>
    <SpinInput id={id} defaultValue={value} disabled />
    <SpinArrows><ScrollBtn aria-label="Increase" disabled><Caret up w={5} c="#8a8a90" /></ScrollBtn><ScrollBtn aria-label="Decrease" disabled><Caret w={5} c="#8a8a90" /></ScrollBtn></SpinArrows>
  </Spin>
);
const Pivot = ({ axis, pick }: { axis: string; pick: string }) => (
  <PivotRow disabled>
    <span>{axis}</span>
    {['Min', 'Cen', 'Max'].map(o => <Choice key={o}><Radio type="radio" name={`pivot-${axis}`} defaultChecked={o === pick} />{o}</Choice>)}
  </PivotRow>
);
const Text = ({ k, v, dim }: { k: string; v: string; dim?: boolean }) => (
  <PropRow $dim={dim}><th scope="row">{k}</th><td><ValueInput aria-label={k} defaultValue={v} disabled={dim} /></td></PropRow>
);
const Place = () => <PropRow><th scope="row">Location</th><td><PlaceButton>Place...</PlaceButton></td></PropRow>;
const Head = ({ children }: { children: string }) => <tr><HeadCell colSpan={2}>{children}</HeadCell></tr>;

export default function App() {
  return (
    <Page>
      <Global />
      <TitleBar>
        <svg width="16" height="16" viewBox="0 0 16 16"><rect y="1" width="16" height="15" fill="#111" /><path d="M1 4L5 7L8 6L11 8L15 5L13 11L9 15L7 12L4 11Z" fill="#eee" /></svg>
        <TitleText>shelter mar12 2 (11968 KB) - Rhinoceros (Educational Lab License) (64-bit) - [Perspective]</TitleText>
        <WinButtons>
          <WinButton $w={28} aria-label="Minimize"><svg width="12" height="10"><rect x="1" y="6" width="10" height="3" fill="#fff" stroke="#445" /></svg></WinButton>
          <WinButton $w={27} aria-label="Restore"><svg width="14" height="12" fill="none" stroke="#fff" strokeWidth="2"><path d="M5 2H12V8" /><rect x="2" y="4" width="7" height="6" /></svg></WinButton>
          <WinButton $w={47} $red aria-label="Close"><svg width="12" height="10" stroke="#fff" strokeWidth="3"><path d="M2 1L10 9M10 1L2 9" /></svg></WinButton>
        </WinButtons>
      </TitleBar>
      <MenuBar>{menus.map(m => <MenuItem key={m}>{m}</MenuItem>)}</MenuBar>
      <Command>
        <History>
          <HistoryText>Command: _Delete</HistoryText>
          <ScrollPair><ScrollBtn aria-label="Scroll up"><Caret up /></ScrollBtn><ScrollBtn aria-label="Scroll down"><Caret /></ScrollBtn></ScrollPair>
        </History>
        <Prompt>
          <PromptLabel htmlFor="cmd">Command:</PromptLabel><PromptInput id="cmd" />
          <ScrollPair><ScrollBtn $boxed aria-label="Previous"><Caret up c="#5468b8" w={5} /></ScrollBtn><ScrollBtn $boxed aria-label="Next"><Caret c="#5468b8" w={5} /></ScrollBtn></ScrollPair>
        </Prompt>
      </Command>
      <Tools>
        <TabRow>
          {tabs.map((t, i) => <TabButton key={t}><Slant on={i === 0} /><TabLabel $on={i === 0}>{t}</TabLabel></TabButton>)}
          <GearSlot aria-label="Toolbar options"><Gear /></GearSlot>
        </TabRow>
        <IconRow>{top.map(([n, more, art]) => <IconButton key={n} aria-label={n} $more={more}><I s={24}>{art}</I></IconButton>)}</IconRow>
      </Tools>
      <Main>
        <LeftTools>
          <Grip />
          <LeftGrid>{left.map(([n, more, art]) => <IconButton key={n} aria-label={n} $more={more}><I s={24}>{art}</I></IconButton>)}</LeftGrid>
        </LeftTools>
        <Center>
          <Viewport>
            <ViewLabel>Perspective<LabelDrop><Caret c="#000" /></LabelDrop></ViewLabel>
            <Scene viewBox="65 154 1455 935" preserveAspectRatio="xMidYMid slice" role="img" aria-label="Shelter model in perspective">
              <path d={gridPath(MAJORS * 5)} stroke="#8f969e" strokeWidth=".6" />
              <path d={gridPath(MAJORS)} stroke="#7e848c" strokeWidth="1" />
              <path d={seg(0, 0.5, 0.31, 0.5)} stroke="#3f9e3c" strokeWidth="2" />
              <path d={seg(0.5, 0.5, 0.5, 0)} stroke="#a94545" strokeWidth="1.500" />
              <Model />
              <g stroke="#5d6268" fill="none"><path d="M101 1052V1028M101 1052L109 1037M101 1052L79 1048" /></g>
              <g fill="#5d6268" fontFamily="Liberation Sans, sans-serif" fontSize="13"><text x="103" y="1030">z</text><text x="110" y="1042">x</text><text x="73" y="1053">y</text></g>
            </Scene>
          </Viewport>
          <ViewTabs>
            {['Perspective', 'Top', 'Front', 'Right'].map((t, i) => <ViewTab key={t}><ViewSlant on={i === 0} /><ViewTabLabel $on={i === 0}>{t}</ViewTabLabel></ViewTab>)}
            <ViewTab aria-label="Add view"><ViewSlant /><ViewTabLabel><svg width="14" height="20" viewBox="0 0 14 20"><path d="M5 5H8V8H11V11H8V14H5V11H2V8H5Z" fill="none" stroke="#66686e" /></svg></ViewTabLabel></ViewTab>
          </ViewTabs>
        </Center>
        <Docks>
          <Dock>
            <Grip />
            <DockTabs>
              <DockTab><DockTabLabel $on><svg width="16" height="16" viewBox="0 0 24 24" stroke="#111"><path d="M3 9L10 6L20 8V19L13 23L3 20Z" fill={B} /><path d="M13 11L20 8V19L13 23Z" fill="#2d47b5" /><path d="M9 7L14 1H22V6L14 9Z" fill="#333" /></svg>BoxEdit</DockTabLabel><DockSlant on w={18} /></DockTab>
              <GearSlot aria-label="BoxEdit options"><Gear /></GearSlot>
            </DockTabs>
            <DockBody>
              <BoxContent>
                <Selected>0 objects selected</Selected>
                <PairButtons><PushButton disabled>Apply</PushButton><PushButton disabled>Reset</PushButton></PairButtons>
                {boxes.map(([name, v, inc]) => (
                  <Section key={name}>
                    <SectionHead $h={20}><Fold aria-label={`Collapse ${name}`}><svg width="5" height="1"><rect width="5" height="1" fill="#555" /></svg></Fold>{name}</SectionHead>
                    <AxisGrid>
                      <AxisName htmlFor={`${name}x`}>X</AxisName><SpinField id={`${name}x`} value={v} /><IncLabel htmlFor={`${name}i`}>Increment</IncLabel>
                      <AxisName htmlFor={`${name}y`}>Y</AxisName><SpinField id={`${name}y`} value={v} /><IncInput id={`${name}i`} defaultValue={inc} disabled />
                      <AxisName htmlFor={`${name}z`}>Z</AxisName><SpinField id={`${name}z`} value={v} />
                    </AxisGrid>
                  </Section>
                ))}
                <SectionHead $h={18}><Fold aria-label="Expand Rotation"><svg width="5" height="5"><path d="M0 2.500H5M2.500 0V5" stroke="#555" /></svg></Fold>Rotation</SectionHead>
                <SectionHead $h={18}><Fold aria-label="Collapse Options"><svg width="5" height="1"><rect width="5" height="1" fill="#555" /></svg></Fold>Options</SectionHead>
                <Options>
                  <Choice as="span">Pivot location:</Choice>
                  <Pivot axis="X" pick="Cen" /><Pivot axis="Y" pick="Min" /><Pivot axis="Z" pick="Cen" />
                  <Choice><Radio type="radio" name="cplane" disabled />Use world CPlane</Choice>
                  <Choice><Radio type="radio" name="cplane" disabled defaultChecked />Use current CPlane</Choice>
                  <Choice><Check type="checkbox" disabled />Transform objects individually</Choice>
                  <Choice><Check type="checkbox" disabled />Show bounding box</Choice>
                  <Choice><Check type="checkbox" disabled />Copy objects</Choice>
                  <Choice $in><Check type="checkbox" disabled />Select copied objects</Choice>
                </Options>
              </BoxContent>
              <HScroll><svg width="5" height="8"><path d="M5 0L0 4L5 8Z" fill="#777" /></svg><svg width="5" height="8"><path d="M0 0L5 4L0 8Z" fill="#777" /></svg></HScroll>
            </DockBody>
          </Dock>
          <Dock>
            <Grip />
            <DockTabs>
              <DockTab><DockTabLabel $on><svg width="16" height="16" viewBox="2 2 20 20" fill="none"><Wheel /></svg>P...</DockTabLabel><DockSlant on w={6} /></DockTab>
              <DockTab><DockTabLabel><svg width="16" height="16" viewBox="0 0 24 24" stroke="#222"><LayersArt /></svg>L...</DockTabLabel><DockSlant w={5} /></DockTab>
              <DockTab><DockTabLabel><svg width="15" height="15" viewBox="0 0 24 24" stroke="#222" strokeWidth="2"><rect x="1" y="2" width="22" height="16" fill="#aaa" /><path d="M7 22H17" strokeWidth="3" /></svg>Di...</DockTabLabel><DockSlant w={3} /></DockTab>
              <DockTab><DockTabLabel><svg width="15" height="15" viewBox="0 0 24 24"><rect x="1" y="1" width="22" height="22" fill="#e8ecf8" stroke="#44559a" strokeWidth="2" /><path d="M1 3H23" stroke="#44559a" strokeWidth="3" /><circle cx="12" cy="14" r="7" fill="#3f62d0" /><text x="12" y="19" textAnchor="middle" fontSize="13" fontWeight="bold" fill="#fff">?</text></svg>H...</DockTabLabel><DockSlant w={11} /></DockTab>
              <GearSlot aria-label="Panel options"><Gear /></GearSlot>
            </DockTabs>
            <DockBody>
              <PropTable>
                <colgroup><col width="90" /><col width="89" /></colgroup>
                <tbody>
                  <Head>Viewport</Head>
                  <Text k="Title" v="Perspective" /><Text k="Width" v="1455" dim /><Text k="Height" v="935" dim />
                  <PropRow><th scope="row">Projection</th><td><ValueSelect><select aria-label="Projection"><option>Perspective</option></select><SelectArrow><Caret c="#000" /></SelectArrow></ValueSelect></td></PropRow>
                  <Head>Camera</Head>
                  <Text k="Lens Length" v="50.0" /><Text k="X Location" v="-245.622" /><Text k="Y Location" v="-54.594" /><Text k="Z Location" v="173.881" /><Place />
                  <Head>Target</Head>
                  <Text k="X Target" v="1.941" /><Text k="Y Target" v="11.737" /><Text k="Z Target" v="27.691" /><Place />
                  <Head>Wallpaper</Head>
                  <PropRow><th scope="row">Filename</th><td><FileCell>(none)<DotsButton aria-label="Browse">...</DotsButton></FileCell></td></PropRow>
                  <PropRow><th scope="row">Show</th><td><CheckCell><Check type="checkbox" aria-label="Show" defaultChecked /></CheckCell></td></PropRow>
                  <PropRow><th scope="row">Gray</th><td><CheckCell><Check type="checkbox" aria-label="Gray" defaultChecked /></CheckCell></td></PropRow>
                </tbody>
              </PropTable>
            </DockBody>
          </Dock>
        </Docks>
      </Main>
      <OsnapBar>
        <OsnapGrip />
        {osnaps.map(([n, on, w]) => <Osnap key={n} $w={w}><Check type="checkbox" defaultChecked={on} />{n}</Osnap>)}
        <Osnap $w={58}><ModeButton aria-label="Project" />Project</Osnap>
        <Osnap $w={60}><ModeButton aria-label="Disable" />Disable</Osnap>
      </OsnapBar>
      <StatusBar>
        <StatusCell $w={57}>CPlane</StatusCell><StatusCell $w={88}>x 207.424</StatusCell><StatusCell $w={88}>y -52.876</StatusCell><StatusCell $w={88}>z 0.000</StatusCell><StatusCell $w={88}>Inches</StatusCell>
        <StatusCell $w={173} $left><Swatch />Default</StatusCell>
        <StatusCell $w={76}>Grid Snap</StatusCell><StatusCell $w={47}>Ortho</StatusCell><StatusCell $w={54}>Planar</StatusCell><StatusCell $w={54} $on>Osnap</StatusCell><StatusCell $w={85} $on>SmartTrack</StatusCell>
        <StatusCell $w={66}>Gumball</StatusCell><StatusCell $w={109}>Record History</StatusCell><StatusCell $w={45}>Filter</StatusCell>
        <Minutes>Minutes from last save: 8</Minutes>
      </StatusBar>
      <TaskBar>
        <TaskButton $w={46} aria-label="Start">
          <svg width="38" height="38" viewBox="0 0 38 38"><defs><radialGradient id="orb" cx=".5" cy=".95"><stop offset="0" stopColor="#5fe0f5" /><stop offset=".6" stopColor="#1d629f" /><stop offset="1" stopColor="#5d87a8" /></radialGradient></defs><circle cx="19" cy="19" r="18" fill="url(#orb)" stroke="#9cc" /><path d="M4 15Q6 3 19 2Q32 3 34 15Q19 20 4 15Z" fill="#fff" opacity=".25" /><path d="M11 9Q15 7 18 9L17 18Q14 16 10 18Z" fill="#ee5a24" /><path d="M20 11Q24 13 29 10L27 19Q22 21 19 19Z" fill="#9cc83c" /><path d="M10 20Q14 18 17 20L15 28Q12 26 8 28Z" fill="#4f9ff0" /><path d="M18 21Q22 23 27 21L25 29Q20 32 16 29Z" fill="#f9c828" /></svg>
        </TaskButton>
        <TaskButton $w={64} aria-label="Internet Explorer">
          <svg width="34" height="36" viewBox="0 0 34 34" fill="none"><path d="M28 22Q24 29 17 29Q8 28 8 18Q9 8 18 8Q28 9 28 19H12" stroke="#2f9de6" strokeWidth="6" /><path d="M4 31Q-1 27 8 14Q20 1 29 3Q34 5 28 14" stroke="#f0b92c" strokeWidth="2.500" /></svg>
        </TaskButton>
        <TaskButton $w={58} $state="open" aria-label="Explorer">
          <svg width="36" height="34" viewBox="0 0 36 34"><path d="M4 5L12 3L14 6H31V29H4Z" fill="#e8c765" /><rect x="5" y="4" width="5" height="3" fill="#2fae3c" /><rect x="14" y="6" width="7" height="3" fill="#d33" /><rect x="22" y="8" width="7" height="3" fill="#38c" /><path d="M3 10H29L33 13V30H5Z" fill="#f8e6a0" /><path d="M9 32V22Q9 20 12 20H27Q30 20 30 22V32H25V25H14V32Z" fill="#9bd4f0" stroke="#5ea9cc" /></svg>
        </TaskButton>
        <TaskButton $w={56} aria-label="Media Player">
          <svg width="28" height="28" viewBox="0 0 28 28"><rect x="7" y="2" width="20" height="24" fill="#2f86b8" stroke="#8bd" /><rect x="1" y="3" width="21" height="23" fill="#9fcbe3" stroke="#dff" /><circle cx="11.500" cy="14.500" r="9" fill="#f07c1c" stroke="#fff" /><path d="M8 9L18 14.500L8 20Z" fill="#fff" /></svg>
        </TaskButton>
        <TaskButton $w={60} aria-label="Chrome">
          <svg width="29" height="29" viewBox="0 0 28 28"><path d="M14 14L1.900 7A14 14 0 0 1 26.100 7Z" fill="#db4437" /><path d="M14 14L26.100 7A14 14 0 0 1 14 28Z" fill="#ffcd40" /><path d="M14 14V28A14 14 0 0 1 1.900 7Z" fill="#0f9d58" /><circle cx="14" cy="14" r="6.500" fill="#fff" /><circle cx="14" cy="14" r="5" fill="#3f7ee0" /></svg>
        </TaskButton>
        <TaskButton $w={58} $state="active" aria-label="Rhinoceros">
          <svg width="32" height="32" viewBox="0 0 32 32"><rect width="32" height="32" fill="#1b1b1b" /><path d="M0 10Q3 15 8 12L11 16L17 15Q25 14 31 5Q29 16 24 19L27 23L20 24L18 29L12 28L9 23Q4 22 0 16Z" fill="#eee" /><path d="M26 2L28 9L21 13Z" fill="#555" /><path d="M14 19L18 18L15 22Z" fill="#333" /><circle cx="6" cy="18" r="1.500" fill="#d22" /></svg>
        </TaskButton>
        <TaskButton $w={58} $state="open" aria-label="Photoshop">
          <svg width="28" height="32" viewBox="0 0 28 32"><rect x="1.500" y="1.500" width="25" height="23" fill="#1d1459" stroke="#6bb2f0" strokeWidth="3" /><text x="14" y="18" textAnchor="middle" fontFamily="Open Sans, sans-serif" fontSize="14" fontWeight="bold" fill="#8fd0ff">Ps</text></svg>
        </TaskButton>
        <Tray>
          <button aria-label="Drive"><svg width="14" height="16"><path d="M1 1H12V14L8 15L1 11Z" fill="#e9b949" stroke="#a87818" /><path d="M4 1V12M8 1V14" stroke="#fff3c0" /><circle cx="10" cy="12" r="3.500" fill="#f4e62a" /><path d="M10 10V14" stroke="#222" /></svg></button>
          <button aria-label="Safely Remove"><svg width="16" height="17"><path d="M3 5V1H7V5H8V13L5 16L2 13V5Z" fill="#999" /><circle cx="10.500" cy="11.500" r="5" fill="#2fa336" /><path d="M8 11L10 14L13 9" stroke="#fff" strokeWidth="1.500" fill="none" /></svg></button>
          <button aria-label="Action Center"><svg width="15" height="15"><path d="M1.500 0V15" stroke="#fff" strokeWidth="1.500" /><path d="M3 1Q6 0 8 2Q11 4 14 3L13 8Q10 9 7 7Q5 6 3 7Z" fill="#fff" /></svg></button>
          <button aria-label="Network"><svg width="16" height="15" fill="none" stroke="#fff"><rect x="5.500" y="3.500" width="9" height="7" /><path d="M1 1V5H5V1M3 5V12M10 11V13M6 13.500H14" strokeWidth="1.500" /></svg></button>
          <button aria-label="Volume"><svg width="16" height="15" fill="none" stroke="#fff"><path d="M1 5H4L7 1V14L4 10H1Z" fill="#fff" /><path d="M9 5Q10.500 7.500 9 10M11 3.500Q13.500 7.500 11 11.500M13 2Q16 7.500 13 13" /></svg></button>
          <Clock>3:14 PM<br />4/23/2013</Clock>
          <ShowDesktop aria-label="Show desktop" />
        </Tray>
      </TaskBar>
    </Page>
  );
}
